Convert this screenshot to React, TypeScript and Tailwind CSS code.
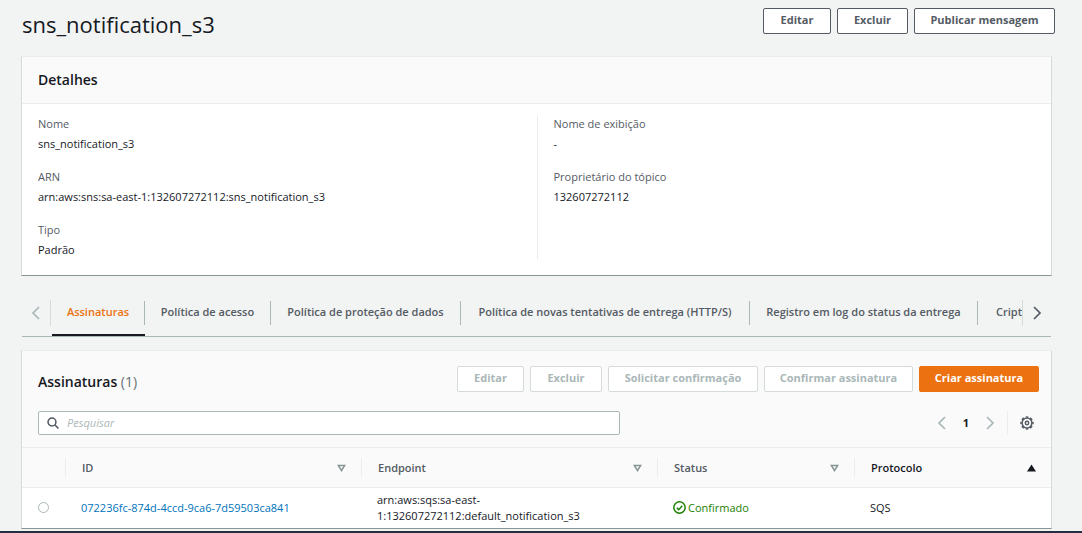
import type { ReactNode } from "react";

const details = [
  [
    { label: "Nome", value: "sns_notification_s3" },
    { label: "ARN", value: "arn:aws:sns:sa-east-1:132607272112:sns_notification_s3" },
    { label: "Tipo", value: "Padrão" },
  ],
  [
    { label: "Nome de exibição", value: "-" },
    { label: "Proprietário do tópico", value: "132607272112" },
  ],
];

const tabs = [
  { label: "Assinaturas", width: "w-[93px]" },
  { label: "Política de acesso", width: "w-[126px]" },
  { label: "Política de proteção de dados", width: "w-[190px]" },
  { label: "Política de novas tentativas de entrega (HTTP/S)", width: "w-[289px]" },
  { label: "Registro em log do status da entrega", width: "w-[228px]" },
];

const columns = [
  { label: "ID", width: "w-[296px]" },
  { label: "Endpoint", width: "w-[296px]" },
  { label: "Status", width: "w-[197px]" },
  { label: "Protocolo", width: "", sorted: true },
];

const variants = {
  normal: "border-[#545b64] bg-white text-[#545b64]",
  disabled: "border-[#d5dbdb] bg-white text-[#aab7b8]",
  primary: "border-[#ec7211] bg-[#ec7211] text-white",
};

function Button({
  variant = "normal",
  width,
  children,
}: {
  variant?: keyof typeof variants;
  width: string;
  children: ReactNode;
}) {
  return (
    <button
      type="button"
      disabled={variant === "disabled"}
      className={`flex h-[26px] shrink-0 items-center justify-center whitespace-nowrap rounded-[2px] border pb-[2px] font-bold ${width} ${variants[variant]}`}
    >
      {children}
    </button>
  );
}

function Chevron({ right = false, className }: { right?: boolean; className: string }) {
  return (
    <svg viewBox="0 0 14 14" fill="none" stroke="currentColor" strokeWidth="1.7" aria-hidden="true" className={className}>
      <path d={right ? "M4 1l6 6-6 6" : "M10 1L4 7l6 6"} />
    </svg>
  );
}

function GearIcon() {
  return (
    <svg viewBox="0 0 14 14" fill="none" stroke="currentColor" aria-hidden="true" className="size-[14px]">
      <circle cx="7" cy="7" r="4.9" strokeWidth="1.5" />
      <circle cx="7" cy="7" r="6" pathLength="80" strokeDasharray="5.5 4.5" strokeDashoffset="2.75" strokeWidth="1.5" />
      <circle cx="7" cy="7" r="1.700" strokeWidth="1.400" />
    </svg>
  );
}

export default function App() {
  return (
    <div className="bg-[#f2f3f3] font-['Open_Sans','Noto_Sans',sans-serif] text-[11px] leading-4 text-[#16191f]">
      <main className="pb-[2px] pl-[21px] pr-[27px] pt-2">
        <header className="flex h-12 items-start justify-between pl-px">
          <h1 className="text-[22px] leading-8">sns_notification_s3</h1>
          <div className="flex gap-[6px]">
            <Button width="w-[68px]">Editar</Button>
            <Button width="w-[71px]">Excluir</Button>
            <Button width="w-[141px]">Publicar mensagem</Button>
          </div>
        </header>

        <div className="mr-[3px]">
          <section className="border border-t-[#eaeded] border-r-[#d5dbdb] border-b-[#879596] border-l-[#d5dbdb] bg-white">
            <h2 className="border-b border-[#eaeded] bg-[#fafafa] px-4 py-[11px] text-[14px] font-semibold leading-6">
              Detalhes
            </h2>
            <div className="grid grid-cols-2 pb-4 pt-3">
              {details.map((group, i) => (
                <dl
                  key={i}
                  className={`flex h-[143px] flex-col gap-[21px] px-4 ${i > 0 ? "border-l border-[#eaeded]" : ""}`}
                >
                  {group.map((item) => (
                    <div key={item.label}>
                      <dt className="text-[#545b64]">{item.label}</dt>
                      <dd className="mt-1 -mb-1">{item.value}</dd>
                    </div>
                  ))}
                </dl>
              ))}
            </div>
          </section>

          <nav aria-label="Seções" className="mx-px mt-6 flex h-[37px] border-b border-[#aab7b8]">
            <button type="button" disabled aria-label="Abas anteriores" className="flex h-[26px] w-[29px] items-center justify-center border-r border-[#d5dbdb] text-[#aab7b8]">
              <Chevron className="size-[14px]" />
            </button>
            <div role="tablist" className="ml-px flex min-w-0 flex-1 overflow-hidden">
              {tabs.map((tab, i) => (
                <button
                  key={tab.label}
                  type="button"
                  role="tab"
                  aria-selected={i === 0}
                  className={`flex h-9 shrink-0 flex-col font-semibold ${tab.width} ${
                    i === 0 ? "border-b-2 border-[#16191f] text-[#ec7211]" : "text-[#545b64]"
                  }`}
                >
                  <span className="mt-px flex h-6 w-full items-center justify-center whitespace-nowrap border-r border-[#aab7b8] pb-[2px]">
                    {tab.label}
                  </span>
                </button>
              ))}
              <button type="button" role="tab" aria-selected="false" className="flex h-9 shrink-0 pl-[18px] font-semibold text-[#545b64]">
                <span className="mt-px flex h-6 items-center whitespace-nowrap pb-[2px]">Criptografia</span>
              </button>
            </div>
            <button type="button" aria-label="Próximas abas" className="flex h-[26px] w-[29px] items-center justify-center border-l border-[#d5dbdb] text-[#545b64]">
              <Chevron right className="size-[14px]" />
            </button>
          </nav>

          <section className="mt-[13px] border border-t-[#eaeded] border-r-[#d5dbdb] border-b-[#879596] border-l-[#d5dbdb] bg-[#fafafa]">
            <div className="flex items-start justify-between pl-4 pr-3 pt-[15px]">
              <h2 className="pt-1 text-[14px] font-semibold leading-6">
                Assinaturas <span className="font-normal text-[#687078]">(1)</span>
              </h2>
              <div className="flex gap-[6px]">
                <Button variant="disabled" width="w-[67px]">Editar</Button>
                <Button variant="disabled" width="w-[72px]">Excluir</Button>
                <Button variant="disabled" width="w-[150px]">Solicitar confirmação</Button>
                <Button variant="disabled" width="w-[149px]">Confirmar assinatura</Button>
                <Button variant="primary" width="w-[120px]">Criar assinatura</Button>
              </div>
            </div>

            <div className="flex items-center justify-between px-4 pb-3 pt-[17px]">
              <label className="flex h-6 w-[582px] items-center gap-2 rounded-[2px] border border-[#aab7b8] bg-white px-2 text-[#545b64]">
                <svg viewBox="0 0 14 14" fill="none" stroke="currentColor" strokeWidth="1.800" aria-hidden="true" className="size-3 shrink-0">
                  <circle cx="5.800" cy="5.800" r="4.600" />
                  <path d="M9.200 9.200l4.200 4.200" />
                </svg>
                <input
                  type="search"
                  aria-label="Pesquisar"
                  placeholder="Pesquisar"
                  className="min-w-0 flex-1 bg-transparent outline-none placeholder:italic placeholder:text-[#aab7b8]"
                />
              </label>
              <div className="flex h-6 items-center">
                <button type="button" disabled aria-label="Página anterior" className="text-[#aab7b8]">
                  <Chevron className="size-[14px]" />
                </button>
                <button type="button" aria-current="page" className="w-[34px] text-center font-bold">1</button>
                <button type="button" disabled aria-label="Próxima página" className="text-[#aab7b8]">
                  <Chevron right className="size-[14px]" />
                </button>
                <button type="button" aria-label="Preferências" className="ml-[10px] flex h-6 items-center border-l border-[#eaeded] pl-3 pr-px text-[#545b64]">
                  <GearIcon />
                </button>
              </div>
            </div>

            <table className="w-full table-fixed border-collapse text-left">
              <thead>
                <tr className="h-10 border-y border-[#eaeded] text-[#545b64]">
                  <th className="w-[43px]" aria-label="Seleção" />
                  {columns.map((col) => (
                    <th key={col.label} className={`p-0 font-semibold ${col.width} ${col.sorted ? "text-[#16191f]" : ""}`}>
                      <div className="flex h-[19px] items-center justify-between border-l border-[#eaeded] pl-4 pr-[15px]">
                        {col.label}
                        <svg viewBox="0 0 9 8" aria-hidden="true" className="h-2 w-[9px]">
                          {col.sorted ? (
                            <path d="M4.500.5L9 7.500H0z" fill="currentColor" />
                          ) : (
                            <path d="M1.300 1.500h6.400L4.500 6.500z" fill="none" stroke="#879596" strokeWidth="1.500" />
                          )}
                        </svg>
                      </div>
                    </th>
                  ))}
                </tr>
              </thead>
              <tbody>
                <tr className="h-10 bg-white">
                  <td className="p-0 pl-4">
                    <input
                      type="radio"
                      name="assinatura"
                      aria-label="072236fc-874d-4ccd-9ca6-7d59503ca841"
                      className="block size-[11px] appearance-none rounded-full border border-[#aab7b8] bg-white"
                    />
                  </td>
                  <td className="p-0 pl-4">
                    <a href="#assinatura" className="text-[#0073bb]">072236fc-874d-4ccd-9ca6-7d59503ca841</a>
                  </td>
                  <td className="p-0 pl-4">
                    arn:aws:sqs:sa-east-
                    <br />
                    1:132607272112:default_notification_s3
                  </td>
                  <td className="p-0 pl-4">
                    <span className="flex items-center gap-[2px] text-[#1d8102]">
                      <svg viewBox="0 0 14 14" fill="none" stroke="currentColor" strokeWidth="1.600" aria-hidden="true" className="size-[13px]">
                        <circle cx="7" cy="7" r="6.100" />
                        <path d="M4 7.200l2.200 2.100L10 5.200" />
                      </svg>
                      Confirmado
                    </span>
                  </td>
                  <td className="p-0 pl-4">SQS</td>
                </tr>
              </tbody>
            </table>
          </section>
        </div>
      </main>
      <footer className="h-[2px] bg-[#232f3e]" />
    </div>
  );
}
